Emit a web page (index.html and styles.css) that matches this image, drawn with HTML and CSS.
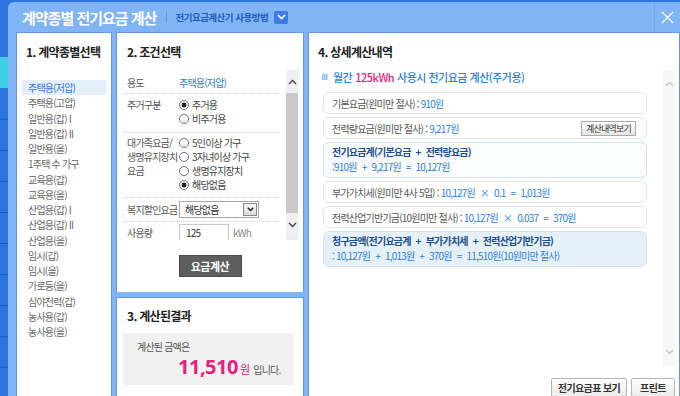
FILE: index.html
```html
<!DOCTYPE html>
<html lang="ko">
<head>
  <meta charset="UTF-8" />
  <meta name="viewport" content="width=device-width, initial-scale=1.0" />
  <title>계약종별 전기요금 계산</title>
  <link rel="stylesheet" href="styles.css">
</head>
<body>
  <div class="dialog">
    <div class="dlg-head">
      <h1>계약종별 전기요금 계산</h1>
      <span class="head-sep"></span>
      <a class="guide">전기요금계산기 사용방법</a>
      <span class="guide-btn">
        <svg width="9" height="6" viewBox="0 0 9 6"><path d="M1 1l3.5 3.5L8 1" fill="none" stroke="#fff" stroke-width="1.6"/></svg>
      </span>
      <span class="close">
        <svg width="13" height="13" viewBox="0 0 13 13"><path d="M1 1l11 11M12 1L1 12" stroke="#fff" stroke-width="1.3"/></svg>
      </span>
    </div>

    <div class="dlg-body">
      <!-- 1. 계약종별 -->
      <div class="panel kinds">
        <h2>1. 계약종별선택</h2>
        <ul class="kind-list">
          <li class="on">주택용(저압)</li>
          <li>주택용(고압)</li>
          <li>일반용(갑) I</li>
          <li>일반용(갑) II</li>
          <li>일반용(을)</li>
          <li>1주택 수 가구</li>
          <li>교육용(갑)</li>
          <li>교육용(을)</li>
          <li>산업용(갑) I</li>
          <li>산업용(갑) II</li>
          <li>산업용(을)</li>
          <li>임시(갑)</li>
          <li>임시(을)</li>
          <li>가로등(을)</li>
          <li>심야전력(갑)</li>
          <li>농사용(갑)</li>
          <li>농사용(을)</li>
        </ul>
      </div>

      <div class="col-mid">
        <!-- 2. 조건선택 -->
        <div class="panel cond">
          <h2>2. 조건선택</h2>
          <div class="form-wrap">
            <div class="form">
              <div class="row row-first">
                <div class="lbl">용도</div>
                <div class="val blue">주택용(저압)</div>
              </div>
              <div class="row row-house">
                <div class="lbl">주거구분</div>
                <div class="radios">
                  <span class="radio checked">주거용</span>
                  <span class="radio">비주거용</span>
                </div>
              </div>
              <div class="row row-family">
                <div class="lbl">대가족요금/<br>생명유지장치<br>요금</div>
                <div class="radios">
                  <span class="radio">5인이상 가구</span>
                  <span class="radio">3자녀이상 가구</span>
                  <span class="radio">생명유지장치</span>
                  <span class="radio checked">해당없음</span>
                </div>
              </div>
              <div class="row row-mid">
                <div class="lbl">복지할인요금</div>
                <div class="sel">
                  해당없음
                  <span class="sel-btn">
                    <svg width="7" height="5" viewBox="0 0 7 5"><path d="M0.8 0.8l2.7 2.7 2.7-2.7" fill="none" stroke="#222" stroke-width="1.4"/></svg>
                  </span>
                </div>
              </div>
              <div class="row row-last">
                <div class="lbl">사용량</div>
                <div class="num">125</div>
                <span class="unit">kWh</span>
              </div>
            </div>
            <div class="vscroll">
              <div class="vs-btn">
                <svg width="9" height="6" viewBox="0 0 9 6"><path d="M1 5l3.5-3.5L8 5" fill="none" stroke="#444" stroke-width="1.4"/></svg>
              </div>
              <div class="vs-thumb"></div>
              <div class="vs-btn">
                <svg width="9" height="6" viewBox="0 0 9 6"><path d="M1 1l3.5 3.5L8 1" fill="none" stroke="#444" stroke-width="1.4"/></svg>
              </div>
            </div>
          </div>
          <button class="calc-btn">요금계산</button>
        </div>

        <!-- 3. 결과 -->
        <div class="panel result">
          <h2>3. 계산된결과</h2>
          <div class="amount">
            <div>계산된 금액은</div>
            <div class="amount-line">
              <span class="big">11,510</span><span class="won">원</span> 입니다.
            </div>
          </div>
        </div>
      </div>

      <!-- 4. 상세계산내역 -->
      <div class="panel detail">
        <h2>4. 상세계산내역</h2>
        <div class="detail-wrap">
          <div class="detail-body">
            <div class="detail-title"><span class="mark"></span>월간 <em>125kWh</em> 사용시 전기요금 계산(주거용)</div>
            <div class="box">기본요금(원미만 절사) :&nbsp;<span class="blue">910원</span></div>
            <div class="box">전력량요금(원미만 절사) :&nbsp;<span class="blue">9,217원</span><span class="mini-btn">계산내역보기</span></div>
            <div class="box box-sum">
              <strong>전기요금계(기본요금 <i>+</i> 전력량요금)</strong>
              <span class="blue">:910원 <i>+</i> 9,217원 <i>=</i> 10,127원</span>
            </div>
            <div class="box">부가가치세(원미만 4사 5입) :&nbsp;<span class="blue">10,127원 <i>×</i> 0.1 <i>=</i> 1,013원</span></div>
            <div class="box">전력산업기반기금(10원미만 절사) :&nbsp;<span class="blue">10,127원 <i>×</i> 0.037 <i>=</i> 370원</span></div>
            <div class="box box-sum box-total">
              <strong>청구금액(전기요금계 <i>+</i> 부가가치세 <i>+</i> 전력산업기반기금)</strong>
              <span class="blue">: 10,127원 <i>+</i> 1,013원 <i>+</i> 370원 <i>=</i> 11,510원(10원미만 절사)</span>
            </div>
          </div>
          <div class="vscroll light">
            <div class="vs-btn">
              <svg width="9" height="6" viewBox="0 0 9 6"><path d="M1 5l3.5-3.5L8 5" fill="none" stroke="#c4c4c4" stroke-width="1.3"/></svg>
            </div>
            <div class="vs-fill"></div>
            <div class="vs-btn">
              <svg width="9" height="6" viewBox="0 0 9 6"><path d="M1 1l3.5 3.5L8 1" fill="none" stroke="#c4c4c4" stroke-width="1.3"/></svg>
            </div>
          </div>
        </div>
        <div class="detail-foot">
          <button class="foot-btn wide">전기요금표 보기</button>
          <button class="foot-btn">프린트</button>
        </div>
      </div>
    </div>
  </div>
</body>
</html>
```

FILE: styles.css
```css
* {
  box-sizing: border-box;
}

:root {
  --head-bg: #80b4f5;
  --panel-line: #6499e6;
  --blue: #2e7fd6;
  --navy: #1c4e8e;
  --pink: #e4217c;
  --text: #555;
}

body {
  margin: 0;
  overflow: hidden;
  font-family: "Noto Sans CJK KR", "Noto Sans", sans-serif;
  font-size: 10px;
  letter-spacing: -0.8px;
  color: var(--text);
  background-color: #2c74de;
  background-image:
    linear-gradient(transparent 57px, #3fcfe6 57px, #3fcfe6 88px, transparent 88px),
    repeating-linear-gradient(transparent 0 30px, #1d5cbf 30px 31px);
  background-size: 8px 100%, 8px 100%;
  background-position: 0 0, 0 89px;
  background-repeat: no-repeat;
}

.dialog {
  margin: 2px 0 0 8px;
  height: 394px;
  background: var(--head-bg);
  border-radius: 6px 0 0 0;
  overflow: hidden;
}

/* header */
.dlg-head {
  height: 30px;
  display: flex;
  align-items: center;
  padding-left: 14px;
}

.dlg-head h1 {
  margin: 0;
  font-size: 15px;
  font-weight: bold;
  letter-spacing: -1px;
  color: #fff;
}

.head-sep {
  width: 1px;
  height: 10px;
  background: #5d96e2;
  margin: 0 8px 0 10px;
}

.guide {
  font-size: 9.5px;
  font-weight: bold;
  letter-spacing: -0.5px;
  color: #1f5db9;
}

.guide-btn {
  width: 14px;
  height: 13px;
  margin-left: 6px;
  background: #3c7edf;
  border-radius: 2px;
  display: flex;
  align-items: center;
  justify-content: center;
}

.close {
  margin-left: auto;
  width: 26px;
  height: 30px;
  border-left: 1px solid #70a8f0;
  display: flex;
  align-items: center;
  justify-content: center;
}

/* body */
.dlg-body {
  display: flex;
  gap: 4px;
  padding-left: 8px;
  height: 364px;
}

.panel {
  background: #fff;
  border: 1px solid var(--panel-line);
  border-bottom: none;
}

.panel h2 {
  margin: 0;
  font-size: 12px;
  line-height: 16px;
  font-weight: bold;
  letter-spacing: -0.7px;
  color: #222;
}

.blue {
  color: var(--blue);
}

/* 1 */
.kinds {
  width: 96px;
  padding: 11px 5px 0;
}

.kinds h2 {
  margin: 0 0 20px 4px;
}

.kind-list {
  list-style: none;
  margin: 0;
  padding: 0;
}

.kind-list li {
  line-height: 15.25px;
  padding-left: 6px;
  color: #666;
  white-space: nowrap;
}

.kind-list li.on {
  background: #e5effc;
  color: #3778d4;
}

/* 2 */
.col-mid {
  width: 188px;
  display: flex;
  flex-direction: column;
  gap: 5px;
}

.cond {
  height: 260px;
  padding-top: 11px;
}

.cond h2 {
  margin: 0 0 10px 10px;
}

.form-wrap {
  display: flex;
  height: 170px;
  margin: 0 5px 0 6px;
}

.form {
  flex: 1;
  overflow: hidden;
  padding-right: 6px;
}

.row {
  display: flex;
  align-items: flex-start;
  padding: 3px 0 5px 4px;
  line-height: 14px;
  border-bottom: 1px dotted #cfcfcf;
  white-space: nowrap;
}

.row-first {
  padding: 6px 0 3px 4px;
}

.row-house {
  padding: 4px 0 6px 4px;
}

.row-mid {
  align-items: center;
  padding: 3px 0 3px 4px;
}

.row-last {
  align-items: center;
  padding: 2px 0 4px 4px;
  border-bottom: none;
}

.lbl {
  width: 52px;
  flex: none;
  color: #555;
}

.radios {
  display: flex;
  flex-direction: column;
}

.radio {
  display: flex;
  align-items: center;
  gap: 3px;
  color: #444;
}

.radio::before {
  content: "";
  width: 10px;
  height: 10px;
  border: 1px solid #6f6f6f;
  border-radius: 50%;
  background: #fff;
  box-sizing: border-box;
}

.radio.checked::before {
  background: radial-gradient(circle, #222 0 2.2px, #fff 2.7px);
}

.sel {
  width: 80px;
  height: 17px;
  border: 1px solid #a9a9a9;
  display: flex;
  align-items: center;
  padding-left: 5px;
  color: #333;
}

.sel-btn {
  margin-left: auto;
  margin-right: 1px;
  width: 14px;
  height: 13px;
  border: 1px solid #8a8a8a;
  background: linear-gradient(#f7f7f7, #dadada);
  display: flex;
  align-items: center;
  justify-content: center;
}

.num {
  width: 50px;
  height: 18px;
  border: 1px solid #c8c8c8;
  padding-left: 6px;
  line-height: 16px;
  color: #333;
}

.unit {
  margin-left: 4px;
  color: #888;
}

.vscroll {
  width: 12px;
  flex: none;
  display: flex;
  flex-direction: column;
  background: #eeeeee;
  overflow: hidden;
}

.vs-btn {
  height: 23px;
  flex: none;
  display: flex;
  align-items: center;
  justify-content: center;
  background: #f0f0f0;
}

.vs-thumb {
  height: 120px;
  flex: none;
  background: #cacaca;
}

.calc-btn {
  display: block;
  margin: 15px auto 0;
  width: 63px;
  height: 22px;
  padding: 0;
  border: 1px solid #4a4a4a;
  background: #5e5e5e;
  color: #fff;
  font-family: inherit;
  font-size: 11px;
  font-weight: bold;
  letter-spacing: -0.5px;
}

/* 3 */
.result {
  flex: 1;
  padding-top: 10px;
}

.result h2 {
  margin: 0 0 9px 10px;
}

.amount {
  margin: 0 9px 0 6px;
  height: 52px;
  background: #f1f1f1;
  padding: 7px 0 0 14px;
  line-height: 14px;
}

.amount-line {
  padding-left: 41px;
  margin-top: 2px;
  line-height: 22px;
  white-space: nowrap;
}

.big {
  font-family: "Noto Sans", sans-serif;
  font-size: 20px;
  font-weight: bold;
  letter-spacing: -0.5px;
  color: var(--pink);
}

.won {
  font-size: 11px;
  color: var(--pink);
  margin: 0 2px 0 2px;
}

/* 4 */
.detail {
  flex: 1;
  padding: 11px 4px 0 9px;
}

.detail h2 {
  margin-bottom: 10px;
}

.detail-wrap {
  display: flex;
  height: 296px;
}

.detail-body {
  flex: 1;
  padding: 0 16px 0 5px;
}

.detail-title {
  display: flex;
  align-items: center;
  line-height: 14px;
  font-size: 11px;
  letter-spacing: -0.5px;
  font-weight: 500;
  color: var(--blue);
  white-space: nowrap;
}

.detail-title em {
  font-style: normal;
  color: var(--pink);
  margin: 0 3px;
}

.mark {
  width: 6px;
  height: 6px;
  margin: 0 5px 0 -1px;
  background: repeating-linear-gradient(90deg, #8cbbea 0 1px, #c6dcf3 1px 2px);
}

.box {
  display: flex;
  align-items: center;
  height: 22px;
  margin-top: 3px;
  padding: 0 8px;
  border: 1px solid #e2e6ec;
  border-radius: 6px;
  white-space: nowrap;
  color: #555;
}

.box i {
  font-style: normal;
  margin: 0 3px;
}

.detail-title + .box {
  margin-top: 8px;
}

.mini-btn {
  margin-left: auto;
  margin-right: 2px;
  width: 55px;
  height: 15px;
  border: 1px solid #aaa;
  background: linear-gradient(#fff, #e6e6e6);
  font-size: 9px;
  line-height: 13px;
  text-align: center;
  color: #333;
}

.box-sum {
  display: block;
  height: 36px;
  padding: 1px 8px 3px;
  line-height: 15px;
  border-color: #d3e1f2;
  background: #fbfcfe;
}

.box-sum strong,
.box-sum span {
  display: block;
}

.box-sum strong {
  color: var(--navy);
  font-weight: bold;
}

.box-total {
  background: #e6f0f9;
}

.vscroll.light {
  background: #f7f7f7;
}

.vscroll.light .vs-btn {
  height: 28px;
  background: transparent;
}

.vs-fill {
  flex: 1;
}

.detail-foot {
  display: flex;
  justify-content: flex-end;
  gap: 4px;
  margin-top: 12px;
}

.foot-btn {
  width: 44px;
  height: 19px;
  padding: 0;
  border: 1px solid #b5b5b5;
  border-radius: 2px;
  background: linear-gradient(#fff, #ececec);
  font-family: inherit;
  font-size: 10px;
  font-weight: bold;
  letter-spacing: -0.6px;
  color: #333;
}

.foot-btn.wide {
  width: 76px;
}
```
